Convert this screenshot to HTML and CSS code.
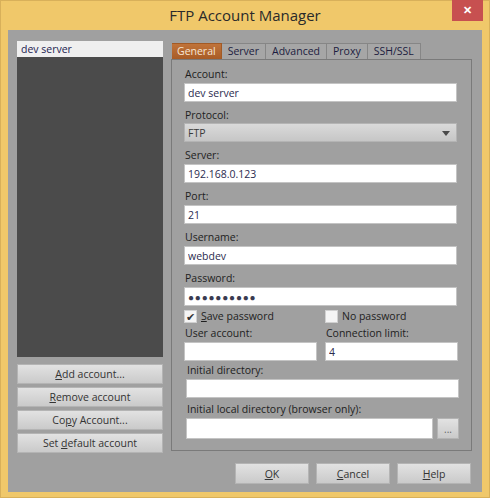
FILE: index.html
```html
<!DOCTYPE html>
<html lang="en">
<head>
  <meta charset="UTF-8">
  <title>FTP Account Manager</title>
  <link rel="stylesheet" href="styles.css">
</head>
<body>
  <div class="window">
    <div class="titlebar">
      <span class="title">FTP Account Manager</span>
      <button class="close" type="button">&#x2715;</button>
    </div>
    <div class="client">
      <div class="main">
        <div class="accounts">
          <ul class="account-list">
            <li class="selected">dev server</li>
          </ul>
          <div class="account-buttons">
            <button class="btn" type="button"><u>A</u>dd account...</button>
            <button class="btn" type="button"><u>R</u>emove account</button>
            <button class="btn" type="button">Co<u>p</u>y Account...</button>
            <button class="btn" type="button">Set <u>d</u>efault account</button>
          </div>
        </div>
        <div class="settings">
          <div class="tabs">
            <span class="tab active">General</span>
            <span class="tab">Server</span>
            <span class="tab">Advanced</span>
            <span class="tab">Proxy</span>
            <span class="tab">SSH/SSL</span>
          </div>
          <div class="tab-panel">
            <div class="field">
              <label>Account:</label>
              <input class="text" type="text" value="dev server">
            </div>
            <div class="field">
              <label>Protocol:</label>
              <div class="select">FTP<span class="arrow"></span></div>
            </div>
            <div class="field">
              <label>Server:</label>
              <input class="text" type="text" value="192.168.0.123">
            </div>
            <div class="field">
              <label>Port:</label>
              <input class="text" type="text" value="21">
            </div>
            <div class="field">
              <label>Username:</label>
              <input class="text" type="text" value="webdev">
            </div>
            <div class="field">
              <label>Password:</label>
              <input class="text password" type="text" value="●●●●●●●●●●">
            </div>
            <div class="pair checks">
              <span class="check"><span class="box checked">&#x2714;</span><span><u>S</u>ave password</span></span>
              <span class="check"><span class="box"></span><span>No password</span></span>
            </div>
            <div class="pair">
              <div class="field">
                <label>User account:</label>
                <input class="text" type="text" value="">
              </div>
              <div class="field">
                <label>Connection limit:</label>
                <input class="text" type="text" value="4">
              </div>
            </div>
            <div class="dirs">
              <div class="field">
                <label>Initial directory:</label>
                <input class="text" type="text" value="">
              </div>
              <div class="field">
                <label>Initial local directory (browser only):</label>
                <div class="browse-row">
                  <input class="text tall" type="text" value="">
                  <button class="btn browse" type="button">...</button>
                </div>
              </div>
            </div>
          </div>
        </div>
      </div>
      <div class="dialog-buttons">
        <button class="btn" type="button"><u>O</u>K</button>
        <button class="btn" type="button"><u>C</u>ancel</button>
        <button class="btn" type="button"><u>H</u>elp</button>
      </div>
    </div>
  </div>
</body>
</html>
```

FILE: styles.css
```css
body {
  margin: 0;
  background: #f0c86a;
  font-family: 'Open Sans', 'Noto Sans', Arial, sans-serif;
  font-size: 10px;
  color: #1e1e1e;
}
.window {
  width: 490px;
  height: 498px;
  box-sizing: border-box;
  border: 1px solid #d8b05a;
  display: flex;
  flex-direction: column;
}
.titlebar {
  height: 29px;
  display: grid;
  grid-template-columns: 1fr auto 1fr;
  align-items: start;
}
.titlebar .title {
  grid-column: 2;
  font-size: 15px;
  line-height: 29px;
  color: #2a2a2a;
}
.titlebar .close {
  grid-column: 3;
  justify-self: end;
  width: 31px; height: 21px;
  margin: -1px 6px 0 0;
  border: none;
  padding: 0;
  background: #c75050;
  color: #fff;
  font-size: 11px;
  font-weight: 700;
}

.client {
  margin: 0 7px;
  height: 462px;
  box-sizing: border-box;
  background: #a0a0a0;
  padding: 11px 10px 0 9px;
  display: flex;
  flex-direction: column;
}
.main {
  display: flex;
  gap: 8px;
}

/* account list column */
.accounts { width: 146px; }
.account-list {
  list-style: none;
  margin: 0 0 7px 0;
  padding: 0;
  height: 316px;
  background: #4b4b4b;
}
.account-list li {
  height: 16px;
  line-height: 16px;
  padding: 0 4px;
  font-size: 10.5px;
  color: #1c1c50;
}
.account-list li.selected { background: #efefef; }
.account-buttons {
  display: flex;
  flex-direction: column;
  gap: 3px;
}
.btn {
  height: 20px;
  padding: 0;
  border: 1px solid #b4b4b4;
  background: linear-gradient(#e2e2e2, #cacaca);
  font-family: inherit;
  font-size: 10.5px;
  color: #333;
}

/* tabs */
.settings {
  width: 301px;
  margin-top: 2px;
}
.tabs {
  display: flex;
  height: 16px;
  padding-left: 1px;
}
.tab {
  height: 16px;
  line-height: 15px;
  padding: 0 6px;
  box-sizing: border-box;
  border: 1px solid #868686;
  border-bottom: none;
  border-left: none;
  font-size: 10.5px;
  color: #1c1c40;
  background: #a6a6a6;
}
.tab.active {
  padding: 0 5px;
  background: linear-gradient(#c0733a, #a85c26);
  border-color: #a25a25;
  color: #f6e6d6;
}
.tab-panel {
  height: 392px;
  box-sizing: border-box;
  border: 1px solid #7a7a7a;
  padding: 6px 14px 0 12px;
}

/* form fields */
.field { margin-bottom: 5px; }
.field label {
  display: block;
  height: 17px;
  line-height: 16px;
  padding-left: 1px;
  font-size: 10.5px;
}
.text {
  display: block;
  width: 100%;
  height: 19px;
  box-sizing: border-box;
  border: 1px solid #c4c4c4;
  background: #fff;
  padding: 0 3px;
  font-family: inherit;
  font-size: 10.5px;
  color: #2b2b4e;
  outline: none;
}
.text.password {
  font-size: 10px;
  letter-spacing: 0.8px;
  color: #3a3a50;
}
.text.tall { height: 21px; }
.select {
  position: relative;
  height: 19px;
  margin-top: -1px;
  line-height: 18px;
  padding: 0 3px;
  box-sizing: border-box;
  border: 1px solid #b4b4b4;
  background: linear-gradient(#dadada, #c6c6c6);
  font-size: 10.5px;
  color: #3a3a3a;
}
.select .arrow {
  position: absolute;
  right: 6px; top: 7px;
  border-left: 4px solid transparent;
  border-right: 4px solid transparent;
  border-top: 5px solid #4a4a4a;
}

.pair {
  display: grid;
  grid-template-columns: 133px 133px;
  gap: 8px;
}
.pair .field { margin-bottom: 1px; }
.checks {
  height: 14px;
  margin: -2px 0 2px 0;
}
.check {
  display: flex;
  align-items: center;
  gap: 4px;
  height: 14px;
  line-height: 14px;
  font-size: 10.5px;
}
.check .box {
  width: 13px; height: 13px;
  box-sizing: border-box;
  background: #f4f4f4;
  border: 1px solid #d0d0d0;
  font-size: 11px;
  line-height: 12px;
  text-align: center;
  color: #333;
}
.dirs {
  margin: 0 -2px 0 2px;
}
.dirs .field { margin-bottom: 3px; }
.browse-row {
  display: flex;
  gap: 4px;
}
.btn.browse {
  width: 22px;
  height: 21px;
  flex: none;
  color: #666;
  font-size: 10px;
}

/* OK / Cancel / Help */
.dialog-buttons {
  display: flex;
  justify-content: flex-end;
  gap: 7px;
  margin-top: 10px;
  padding-right: 1px;
}
.dialog-buttons .btn {
  width: 74px;
  height: 21px;
}
```
